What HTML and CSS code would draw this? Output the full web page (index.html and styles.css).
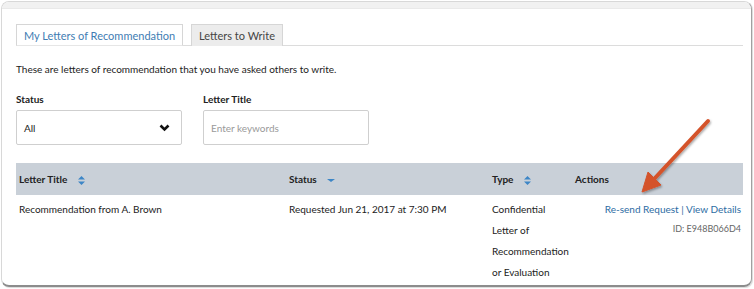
FILE: index.html
```html
<!DOCTYPE html>
<html lang="en">
<head>
  <meta charset="UTF-8" />
  <title>Letters of Recommendation</title>
  <link rel="stylesheet" href="styles.css">
</head>
<body>
  <div class="panel">
    <div class="top-band"></div>
    <div class="content">
      <div class="tabs">
        <div class="tab tab-active">My Letters of Recommendation</div>
        <div class="tab">Letters to Write</div>
      </div>

      <p class="intro">These are letters of recommendation that you have asked others to write.</p>

      <div class="filters">
        <div class="filter">
          <label class="filter-label">Status</label>
          <div class="select-box">
            <span>All</span>
            <svg class="chevron" width="11" height="8" viewBox="0 0 11 8"><path d="M1.5 1.5 L5.5 5.5 L9.5 1.5" fill="none" stroke="#111" stroke-width="2.6"/></svg>
          </div>
        </div>
        <div class="filter">
          <label class="filter-label">Letter Title</label>
          <div class="text-box">Enter keywords</div>
        </div>
      </div>

      <table class="letters">
        <thead>
          <tr>
            <th class="col-title">Letter Title
              <svg class="sort" width="7" height="9" viewBox="0 0 7 9"><path d="M3.5 0 L7 3.6 H0 Z M0 5.4 H7 L3.5 9 Z" fill="#3d86c6"/></svg>
            </th>
            <th class="col-status">Status
              <svg class="sort" width="8" height="6" viewBox="0 0 8 6"><path d="M0 2 H8 L4 5 Z" fill="#3d86c6"/></svg>
            </th>
            <th class="col-type">Type
              <svg class="sort" width="7" height="9" viewBox="0 0 7 9"><path d="M3.5 0 L7 3.6 H0 Z M0 5.4 H7 L3.5 9 Z" fill="#3d86c6"/></svg>
            </th>
            <th class="col-actions">Actions</th>
          </tr>
        </thead>
        <tbody>
          <tr>
            <td>Recommendation from A. Brown</td>
            <td>Requested Jun 21, 2017 at 7:30 PM</td>
            <td>Confidential Letter of Recommendation or Evaluation</td>
            <td class="actions">
              <div class="action-links"><a href="#">Re-send Request</a> | <a href="#">View Details</a></div>
              <div class="letter-id">ID: E948B066D4</div>
            </td>
          </tr>
        </tbody>
      </table>
    </div>
  </div>

  <!-- annotation arrow -->
  <svg class="arrow" width="754" height="289" viewBox="0 0 754 289">
    <defs>
      <filter id="shadow" x="-20%" y="-20%" width="140%" height="140%">
        <feDropShadow dx="1" dy="1.5" stdDeviation="1.2" flood-color="#000" flood-opacity="0.35"/>
      </filter>
    </defs>
    <g filter="url(#shadow)" fill="#d4532b" stroke="#d4532b">
      <line x1="708" y1="121" x2="655" y2="178" stroke-width="4" stroke-linecap="round"/>
      <polygon points="642,192 661,185 648,172" stroke-width="1" stroke-linejoin="round"/>
    </g>
  </svg>
</body>
</html>
```

FILE: styles.css
```css
body {
  margin: 0;
  font-family: "Lato", "Open Sans", sans-serif;
  color: #222;
  background: #fff;
  position: relative;
  width: 754px;
  height: 289px;
  overflow: hidden;
}

.panel {
  margin: 1px 0 0 1px;
  width: 751px;
  height: 286px;
  box-sizing: border-box;
  border: 1px solid #d8d8d8;
  border-right-color: #a0a0a0;
  border-bottom: 2px solid #8c8c8c;
  border-radius: 8px;
  overflow: hidden;
  box-shadow: 1px 1px 1px rgba(0, 0, 0, 0.15);
}

.top-band {
  height: 6px;
  background: #f1f1f1;
  border-bottom: 1px solid #e9e9e9;
}

.content {
  padding: 15px 8px 0 14px;
}

.tabs {
  display: flex;
  gap: 8px;
  border-bottom: 1px solid #dcdcdc;
}

.tab {
  height: 22px;
  line-height: 21px;
  box-sizing: border-box;
  width: 92px;
  font-size: 11px;
  color: #444;
  background: #ececec;
  border: 1px solid #d6d6d6;
  border-bottom: none;
  margin-bottom: -1px;
  white-space: nowrap;
  text-align: center;
}

.tab-active {
  background: #fff;
  color: #3f7db3;
  width: 167px;
  border-bottom: 1px solid #e6e6e6;
}

.intro {
  margin: 16px 0 0;
  font-size: 10px;
  line-height: 14px;
}

.filters {
  display: flex;
  gap: 21px;
  margin-top: 17px;
}

.filter {
  display: flex;
  flex-direction: column;
  width: 166px;
}

.filter-label {
  font-size: 10px;
  font-weight: bold;
  line-height: 13px;
  margin-bottom: 4px;
}

.select-box,
.text-box {
  height: 35px;
  box-sizing: border-box;
  border: 1px solid #cfcfcf;
  border-radius: 2px;
  display: flex;
  align-items: center;
  padding: 0 11px 0 7px;
  font-size: 10px;
}

.select-box {
  justify-content: space-between;
}

.text-box {
  color: #9a9a9a;
}

.letters {
  margin-top: 18px;
  width: 727px;
  border-collapse: collapse;
  font-size: 10px;
}

.letters th {
  background: #c9d0d8;
  height: 32px;
  padding: 0 3px;
  text-align: left;
  font-weight: bold;
  white-space: nowrap;
}

.sort {
  margin-left: 8px;
  vertical-align: middle;
}

.col-title { width: 264px; }
.col-status { width: 197px; }
.col-type { width: 77px; }

.letters td {
  padding: 4px 3px 0;
  vertical-align: top;
  line-height: 21px;
}

.letters td.actions {
  text-align: right;
  padding-right: 2px;
}

.action-links {
  color: #2d6ca3;
}

.action-links a {
  color: #2d6ca3;
  text-decoration: none;
}

.letter-id {
  font-size: 9px;
  line-height: 18px;
  color: #666;
}

.arrow {
  position: absolute;
  left: 0;
  top: 0;
  pointer-events: none;
}
```
